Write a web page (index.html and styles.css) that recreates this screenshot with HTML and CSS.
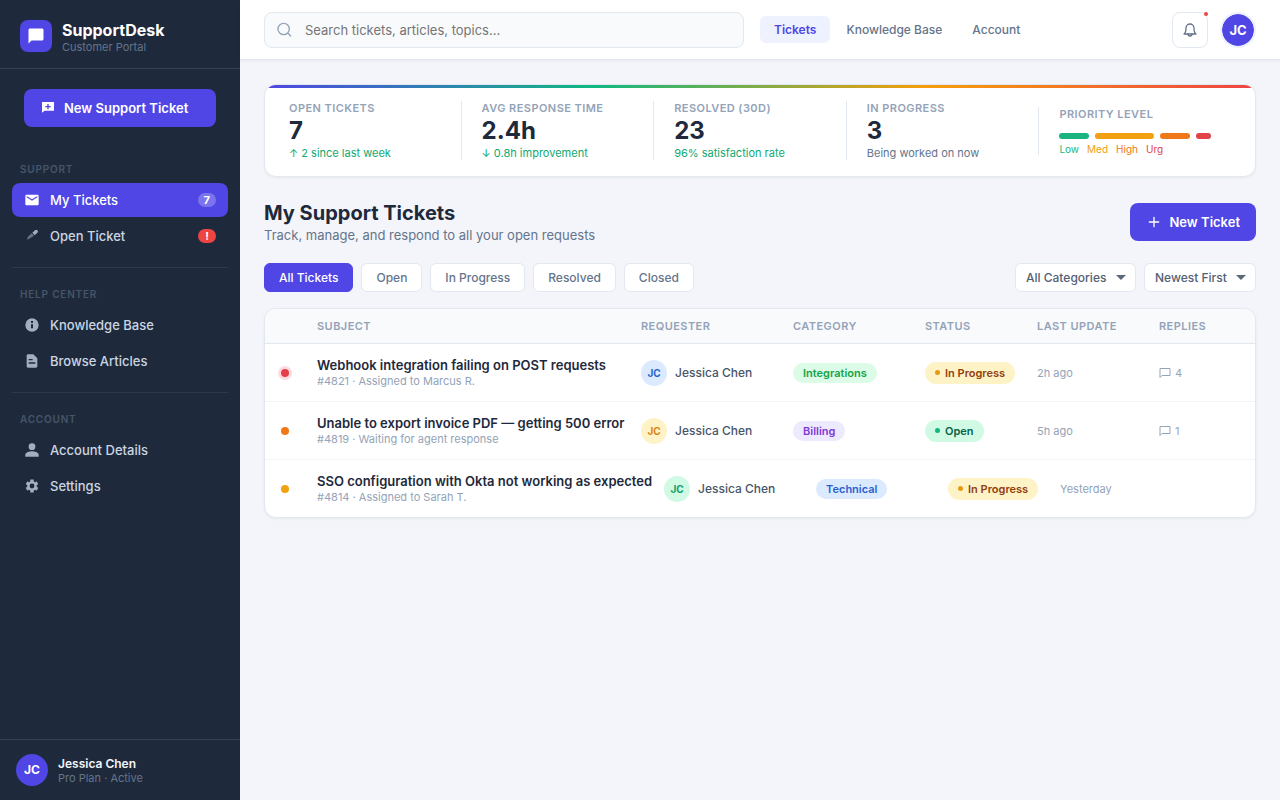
FILE: index.html
```html
<!DOCTYPE html>
<html lang="en">
<head>
  <meta charset="UTF-8" />
  <meta name="viewport" content="width=device-width, initial-scale=1.0" />
  <title>SupportDesk - My Support Tickets</title>
  <link rel="stylesheet" href="styles.css">
</head>
<body>
  <aside class="sidebar">
    <div class="brand">
      <div class="brand-icon">
        <svg width="18" height="18" viewBox="0 0 24 24" fill="currentColor"><path d="M20 2H4c-1.100 0-2 .9-2 2v18l4-4h14c1.100 0 2-.9 2-2V4c0-1.100-.9-2-2-2z"/></svg>
      </div>
      <div>
        <div class="brand-name">SupportDesk</div>
        <div class="brand-sub">Customer Portal</div>
      </div>
    </div>

    <button class="btn btn-side" type="button">
      <svg width="16" height="16" viewBox="0 0 24 24" fill="currentColor"><path d="M21 3H3v16l4-3h14V3zm-5 8h-3v3h-2v-3H8V9h3V6h2v3h3v2z"/></svg>
      New Support Ticket
    </button>

    <nav class="side-nav">
      <div class="nav-section">
        <div class="nav-label">Support</div>
        <a class="nav-item active" href="#">
          <svg width="16" height="16" viewBox="0 0 24 24" fill="currentColor"><path d="M20 4H4c-1.100 0-2 .9-2 2v12c0 1.100.9 2 2 2h16c1.100 0 2-.9 2-2V6c0-1.100-.9-2-2-2zm0 4l-8 5-8-5V6l8 5 8-5v2z"/></svg>
          My Tickets
          <span class="nav-badge">7</span>
        </a>
        <a class="nav-item" href="#">
          <svg width="16" height="16" viewBox="0 0 24 24" fill="currentColor"><path d="M12.500 7l4.500-4h3l1 3-5 5z"/><path d="M11.500 8l3.500 3.500-7 4.500-3.500 1.500 1-4z" opacity=".55"/></svg>
          Open Ticket
          <span class="nav-badge alert">!</span>
        </a>
      </div>
      <div class="nav-section">
        <div class="nav-label">Help Center</div>
        <a class="nav-item" href="#">
          <svg width="16" height="16" viewBox="0 0 24 24" fill="currentColor"><path d="M12 2a10 10 0 1 0 0 20 10 10 0 0 0 0-20zm1.500 15h-3v-6h3v6zm0-8h-3V6h3v3z"/></svg>
          Knowledge Base
        </a>
        <a class="nav-item" href="#">
          <svg width="16" height="16" viewBox="0 0 24 24" fill="currentColor"><path d="M14 2H6c-1.100 0-2 .9-2 2v16c0 1.100.9 2 2 2h12c1.100 0 2-.9 2-2V8l-6-6zM7 9h6v2H7V9zm10 7H7v-2h10v2z"/></svg>
          Browse Articles
        </a>
      </div>
      <div class="nav-section">
        <div class="nav-label">Account</div>
        <a class="nav-item" href="#">
          <svg width="16" height="16" viewBox="0 0 24 24" fill="currentColor"><circle cx="12" cy="7" r="5"/><path d="M12 14c-3.300 0-10 1.700-10 5v3h20v-3c0-3.300-6.700-5-10-5z"/></svg>
          Account Details
        </a>
        <a class="nav-item" href="#">
          <svg width="16" height="16" viewBox="0 0 24 24" fill="currentColor"><path d="M19.140 12.940c.04-.3.060-.61.060-.94s-.02-.64-.07-.94l2.030-1.580c.18-.14.23-.41.120-.61l-1.920-3.320c-.12-.22-.37-.29-.59-.22l-2.390.96c-.5-.38-1.030-.7-1.620-.94L14.400 2.810c-.04-.24-.24-.41-.48-.41h-3.840c-.24 0-.43.170-.47.410L9.250 5.350c-.59.240-1.130.570-1.620.940l-2.390-.96c-.22-.08-.47 0-.59.220L2.740 8.870c-.12.210-.08.470.120.610l2.030 1.580c-.05.300-.09.630-.09.940s.02.640.07.940l-2.030 1.580c-.18.140-.23.410-.12.610l1.920 3.320c.12.220.37.290.59.220l2.390-.96c.5.380 1.030.7 1.620.940l.36 2.540c.05.240.24.410.48.410h3.840c.24 0 .44-.17.470-.41l.36-2.540c.59-.24 1.130-.56 1.620-.94l2.390.96c.22.080.47 0 .59-.22l1.920-3.320c.12-.22.070-.47-.12-.61l-2.010-1.580zM12 15.600a3.600 3.600 0 1 1 0-7.200 3.600 3.600 0 0 1 0 7.200z"/></svg>
          Settings
        </a>
      </div>
    </nav>

    <div class="side-user">
      <div class="avatar">JC</div>
      <div>
        <div class="user-name">Jessica Chen</div>
        <div class="user-plan">Pro Plan · Active</div>
      </div>
    </div>
  </aside>

  <div class="main">
    <header class="topbar">
      <label class="search">
        <svg width="16" height="16" viewBox="0 0 24 24" fill="none" stroke="currentColor" stroke-width="2" stroke-linecap="round"><circle cx="10" cy="10.500" r="8.500"/><path d="M16.500 17l4 4"/></svg>
        <input type="text" placeholder="Search tickets, articles, topics..." aria-label="Search">
      </label>
      <nav class="top-nav">
        <a class="active" href="#">Tickets</a>
        <a href="#">Knowledge Base</a>
        <a href="#">Account</a>
      </nav>
      <div class="top-actions">
        <button class="bell" type="button" aria-label="Notifications">
          <svg width="16" height="16" viewBox="0 0 24 24" fill="none" stroke="currentColor" stroke-width="2" stroke-linecap="round" stroke-linejoin="round"><path d="M18 9a6 6 0 0 0-12 0c0 7-3 9-3 9h18s-3-2-3-9"/><path d="M9 18a3 3 0 0 0 6 0"/></svg>
          <span class="bell-dot"></span>
        </button>
        <div class="avatar ring">JC</div>
      </div>
    </header>

    <main class="content">
      <section class="stats">
        <div class="stats-bar"></div>
        <div class="stats-row">
          <div class="stat">
            <div class="stat-label">Open Tickets</div>
            <div class="stat-value">7</div>
            <div class="stat-note good">↑ 2 since last week</div>
          </div>
          <div class="stat">
            <div class="stat-label">Avg Response Time</div>
            <div class="stat-value">2.4h</div>
            <div class="stat-note good">↓ 0.8h improvement</div>
          </div>
          <div class="stat">
            <div class="stat-label">Resolved (30d)</div>
            <div class="stat-value">23</div>
            <div class="stat-note good">96% satisfaction rate</div>
          </div>
          <div class="stat">
            <div class="stat-label">In Progress</div>
            <div class="stat-value">3</div>
            <div class="stat-note">Being worked on now</div>
          </div>
          <div class="stat">
            <div class="stat-label">Priority Level</div>
            <div class="priority-bar">
              <span class="seg low"></span>
              <span class="seg med"></span>
              <span class="seg high"></span>
              <span class="seg urg"></span>
            </div>
            <div class="priority-legend">
              <span class="t-low">Low</span>
              <span class="t-med">Med</span>
              <span class="t-high">High</span>
              <span class="t-urg">Urg</span>
            </div>
          </div>
        </div>
      </section>

      <div class="page-head">
        <div>
          <h1>My Support Tickets</h1>
          <p>Track, manage, and respond to all your open requests</p>
        </div>
        <button class="btn" type="button">
          <svg width="16" height="16" viewBox="0 0 24 24" fill="none" stroke="currentColor" stroke-width="2" stroke-linecap="round"><path d="M12 5v14M5 12h14"/></svg>
          New Ticket
        </button>
      </div>

      <div class="toolbar">
        <div class="filters">
          <button class="chip active" type="button">All Tickets</button>
          <button class="chip" type="button">Open</button>
          <button class="chip" type="button">In Progress</button>
          <button class="chip" type="button">Resolved</button>
          <button class="chip" type="button">Closed</button>
        </div>
        <div class="filters">
          <span class="select">
            <select aria-label="Category">
              <option>All Categories</option>
            </select>
          </span>
          <span class="select">
            <select aria-label="Sort order">
              <option>Newest First</option>
            </select>
          </span>
        </div>
      </div>

      <table class="tickets">
        <thead>
          <tr>
            <th></th>
            <th>Subject</th>
            <th>Requester</th>
            <th>Category</th>
            <th>Status</th>
            <th>Last Update</th>
            <th>Replies</th>
          </tr>
        </thead>
        <tbody>
          <tr>
            <td><span class="dot urgent"></span></td>
            <td>
              <div class="subject">Webhook integration failing on POST requests</div>
              <div class="meta">#4821 · Assigned to Marcus R.</div>
            </td>
            <td class="requester"><span class="mini blue">JC</span>Jessica Chen</td>
            <td><span class="tag integrations">Integrations</span></td>
            <td><span class="status progress">In Progress</span></td>
            <td class="muted">2h ago</td>
            <td class="muted replies">
              <svg width="12" height="12" viewBox="0 0 24 24" fill="none" stroke="currentColor" stroke-width="2"><path d="M2 21V3h20v14H6z"/></svg>
              4
            </td>
          </tr>
          <tr>
            <td><span class="dot high"></span></td>
            <td>
              <div class="subject">Unable to export invoice PDF — getting 500 error</div>
              <div class="meta">#4819 · Waiting for agent response</div>
            </td>
            <td class="requester"><span class="mini yellow">JC</span>Jessica Chen</td>
            <td><span class="tag billing">Billing</span></td>
            <td><span class="status open">Open</span></td>
            <td class="muted">5h ago</td>
            <td class="muted replies">
              <svg width="12" height="12" viewBox="0 0 24 24" fill="none" stroke="currentColor" stroke-width="2"><path d="M2 21V3h20v14H6z"/></svg>
              1
            </td>
          </tr>
          <tr>
            <td><span class="dot med"></span></td>
            <td>
              <div class="subject">SSO configuration with Okta not working as expected</div>
              <div class="meta">#4814 · Assigned to Sarah T.</div>
            </td>
            <td class="requester"><span class="mini green">JC</span>Jessica Chen</td>
            <td><span class="tag technical">Technical</span></td>
            <td><span class="status progress">In Progress</span></td>
            <td class="muted">Yesterday</td>
            <td></td>
          </tr>
        </tbody>
      </table>
    </main>
  </div>
</body>
</html>
```

FILE: styles.css
```css
:root {
  --bg: #f3f5fa;
  --side: #1e2a3b;
  --accent: #4f46e5;
  --text: #1e293b;
  --sub: #64748b;
  --muted: #94a3b8;
  --line: #e2e8f0;
  --green: #10b981;
  --amber: #f0a010;
  --orange: #f07818;
  --red: #ef4444;
}
* {
  box-sizing: border-box;
  margin: 0;
  padding: 0;
}
body {
  display: flex;
  min-height: 100vh;
  font-family: Inter, "Liberation Sans", sans-serif;
  font-size: 13px;
  line-height: 16px;
  background: var(--bg);
  color: var(--text);
}
a {
  text-decoration: none;
  color: inherit;
}
button, input, select {
  font: inherit;
}
svg {
  flex-shrink: 0;
}

/* sidebar */
.sidebar {
  width: 240px;
  flex-shrink: 0;
  display: flex;
  flex-direction: column;
  background: var(--side);
}
.brand {
  display: flex;
  align-items: flex-start;
  gap: 10px;
  padding: 20px 20px 14px;
  border-bottom: 1px solid #334155;
}
.brand-icon {
  width: 32px;
  height: 32px;
  display: flex;
  align-items: center;
  justify-content: center;
  border-radius: 8px;
  background: var(--accent);
  color: white;
}
.brand-name {
  font-size: 16px;
  line-height: 20px;
  font-weight: 700;
  color: white;
}
.brand-sub, .user-plan {
  font-size: 11px;
  line-height: 14px;
  color: var(--sub);
}
.btn {
  display: flex;
  align-items: center;
  gap: 8px;
  height: 38px;
  padding: 0 16px;
  border: none;
  border-radius: 8px;
  background: var(--accent);
  color: white;
  font-weight: 600;
  cursor: pointer;
}
.btn-side {
  margin: 20px 24px 32px;
}
.side-nav {
  flex: 1;
  padding: 0 12px;
}
.nav-section {
  display: flex;
  flex-direction: column;
  gap: 2px;
}
.nav-section + .nav-section {
  margin-top: 14px;
  padding-top: 16px;
  border-top: 1px solid #2c394c;
}
.nav-label {
  padding: 4px 8px 6px;
  font-size: 10px;
  line-height: 12px;
  font-weight: 600;
  letter-spacing: 0.08em;
  text-transform: uppercase;
  color: #475569;
}
.nav-item {
  display: flex;
  align-items: center;
  gap: 10px;
  height: 34px;
  padding: 0 12px;
  border-radius: 8px;
  color: #cbd5e1;
  font-weight: 500;
}
.nav-item svg {
  color: #a3afc0;
}
.nav-item.active {
  background: var(--accent);
  color: white;
}
.nav-item.active svg {
  color: white;
}
.nav-badge {
  min-width: 18px;
  margin-left: auto;
  padding: 0 6px;
  border-radius: 8px;
  background: #7b74ec;
  color: white;
  font-size: 11px;
  line-height: 14px;
  font-weight: 700;
  text-align: center;
}
.nav-badge.alert {
  background: var(--red);
}
.side-user {
  display: flex;
  align-items: center;
  gap: 10px;
  padding: 14px 16px;
  border-top: 1px solid #334155;
}
.avatar {
  width: 32px;
  height: 32px;
  display: flex;
  align-items: center;
  justify-content: center;
  border-radius: 50%;
  background: var(--accent);
  color: white;
  font-size: 12px;
  font-weight: 700;
}
.avatar.ring {
  width: 36px;
  height: 36px;
  border: 2px solid #eef2ff;
  background-clip: padding-box;
  font-size: 13px;
}
.user-name {
  font-size: 12px;
  line-height: 15px;
  font-weight: 600;
  color: #f1f5f9;
}

/* top bar */
.main {
  flex: 1;
  min-width: 0;
}
.topbar {
  display: flex;
  align-items: center;
  gap: 16px;
  height: 60px;
  padding: 0 24px;
  background: white;
  border-bottom: 1px solid var(--line);
  box-shadow: 0 1px 3px rgba(0, 0, 0, 0.06);
}
.search {
  display: flex;
  align-items: center;
  gap: 12px;
  flex: 0 1 480px;
  height: 36px;
  padding: 0 12px;
  border: 1px solid var(--line);
  border-radius: 8px;
  background: #f8fafc;
  color: var(--muted);
}
.search input {
  flex: 1;
  min-width: 0;
  border: none;
  outline: none;
  background: none;
  color: var(--text);
}
.search input::placeholder {
  color: #757575;
}
.top-nav {
  display: flex;
  gap: 2px;
}
.top-nav a {
  padding: 6px 14px;
  border-radius: 6px;
  font-size: 12px;
  line-height: 15px;
  font-weight: 500;
  color: var(--sub);
}
.top-nav a.active {
  background: #eef2ff;
  color: var(--accent);
  font-weight: 600;
}
.top-actions {
  display: flex;
  align-items: center;
  gap: 12px;
  margin-left: auto;
}
.bell {
  position: relative;
  width: 36px;
  height: 36px;
  display: flex;
  align-items: center;
  justify-content: center;
  border: 1px solid var(--line);
  border-radius: 8px;
  background: white;
  color: var(--sub);
}
.bell-dot {
  position: absolute;
  top: -1px;
  right: -1px;
  width: 4px;
  height: 4px;
  border-radius: 50%;
  background: var(--red);
}

/* stats */
.content {
  padding: 24px;
}
.stats {
  position: relative;
  overflow: hidden;
  border: 1px solid var(--line);
  border-radius: 12px;
  background: white;
  box-shadow: 0 1px 3px rgba(0, 0, 0, 0.05);
}
.stats-bar {
  position: absolute;
  top: 0;
  left: 0;
  right: 0;
  height: 3px;
  background: linear-gradient(90deg, var(--accent), #10b981, #f59e0b, #ef4444);
}
.stats-row {
  display: flex;
  align-items: center;
  padding: 16px 24px 16px 3px;
}
.stat {
  flex: 1;
  display: flex;
  flex-direction: column;
  gap: 2px;
  padding: 0 20px;
  border-left: 1px solid var(--line);
  white-space: nowrap;
}
.stat:first-child {
  border-left-color: transparent;
}
.stat-label, .tickets th {
  font-size: 11px;
  line-height: 14px;
  font-weight: 600;
  letter-spacing: 0.04em;
  text-transform: uppercase;
  color: var(--muted);
}
.stat-value {
  font-size: 24px;
  line-height: 28px;
  font-weight: 700;
}
.stat-note {
  font-size: 11px;
  line-height: 13px;
  color: var(--sub);
}
.stat-note.good {
  color: #10a872;
}
.priority-bar {
  display: flex;
  gap: 6px;
  margin-top: 10px;
}
.seg {
  flex: 2;
  height: 6px;
  border-radius: 3px;
}
.seg.low { background: #1bb380; }
.seg.med { flex: 4; background: var(--amber); }
.seg.high { background: var(--orange); }
.seg.urg { flex: 1; background: #e0444a; }
.priority-legend {
  display: flex;
  gap: 8px;
  margin-top: 2px;
  font-size: 10px;
  line-height: 12px;
}
.t-low { color: #10b981; }
.t-med { color: #f0a010; }
.t-high { color: #f07818; }
.t-urg { color: #e0444a; }

/* page head + filters */
.page-head {
  display: flex;
  align-items: center;
  justify-content: space-between;
  margin: 24px 0 20px;
}
.page-head h1 {
  font-size: 20px;
  line-height: 24px;
  font-weight: 700;
}
.page-head p {
  margin-top: 2px;
  color: var(--sub);
}
.toolbar {
  display: flex;
  justify-content: space-between;
  gap: 16px;
}
.filters {
  display: flex;
  gap: 8px;
}
.chip, .select select {
  padding: 6px 14px;
  border: 1px solid var(--line);
  border-radius: 6px;
  background: white;
  color: var(--sub);
  font-size: 12px;
  line-height: 15px;
  font-weight: 500;
}
.chip.active {
  border-color: var(--accent);
  background: var(--accent);
  color: white;
}
.select {
  position: relative;
  display: flex;
}
.select select {
  appearance: none;
  padding: 6px 28px 6px 10px;
  color: #526074;
}
.select::after {
  content: "";
  position: absolute;
  top: 12px;
  right: 10px;
  border: 5px solid transparent;
  border-top-color: #5b6878;
  border-bottom: none;
  pointer-events: none;
}

/* tickets table */
.tickets {
  display: block;
  margin-top: 16px;
  overflow: hidden;
  border: 1px solid var(--line);
  border-radius: 12px;
  background: white;
  box-shadow: 0 1px 3px rgba(0, 0, 0, 0.06);
}
.tickets thead, .tickets tbody {
  display: block;
}
.tickets tr {
  display: grid;
  grid-template-columns: 24px 1fr 140px 120px 100px 110px 80px;
  gap: 12px;
  align-items: center;
  padding: 0 16px;
}
.tickets thead tr {
  height: 35px;
  background: #f8fafc;
  border-bottom: 1px solid var(--line);
}
.tickets th {
  text-align: left;
}
.tickets tbody tr {
  height: 58px;
  border-bottom: 1px solid #f1f5f9;
}
.tickets tbody tr:last-child {
  height: 57px;
  border-bottom: none;
}
.tickets td {
  white-space: nowrap;
}
.dot {
  display: block;
  width: 8px;
  height: 8px;
  border-radius: 50%;
}
.dot.urgent {
  background: #e5404a;
  box-shadow: 0 0 0 3px #fcdcde;
}
.dot.high { background: var(--orange); }
.dot.med { background: var(--amber); }
.subject {
  font-weight: 600;
}
.meta {
  font-size: 11px;
  line-height: 16px;
  color: var(--muted);
}
.requester {
  display: flex;
  align-items: center;
  gap: 8px;
  font-size: 12px;
  font-weight: 500;
  color: #475569;
}
.mini {
  width: 26px;
  height: 26px;
  display: flex;
  align-items: center;
  justify-content: center;
  border-radius: 50%;
  font-size: 10px;
  font-weight: 700;
}
.mini.blue { background: #dbeafe; color: #2563c8; }
.mini.yellow { background: #fef3c7; color: #d98310; }
.mini.green { background: #d1fae5; color: #0f9f68; }
.tag, .status {
  display: flex;
  align-items: center;
  width: fit-content;
  padding: 3px 10px;
  border-radius: 11px;
  font-size: 11px;
  line-height: 14px;
  font-weight: 600;
}
.tag.integrations { background: #dcfce7; color: #16a34a; }
.tag.billing { background: #ede9fe; color: #7e3bd4; }
.tag.technical { background: #dbeafe; color: #2b5fd0; }
.status {
  gap: 5px;
  padding: 4px 10px;
}
.status::before {
  content: "";
  width: 5px;
  height: 5px;
  border-radius: 50%;
}
.status.progress { background: #fef3c7; color: #92400e; }
.status.progress::before { background: #e69a14; }
.status.open { background: #d1fae5; color: #065f46; }
.status.open::before { background: #10b981; }
.muted {
  font-size: 11px;
  color: var(--muted);
}
.replies {
  display: flex;
  align-items: center;
  gap: 4px;
}
```
